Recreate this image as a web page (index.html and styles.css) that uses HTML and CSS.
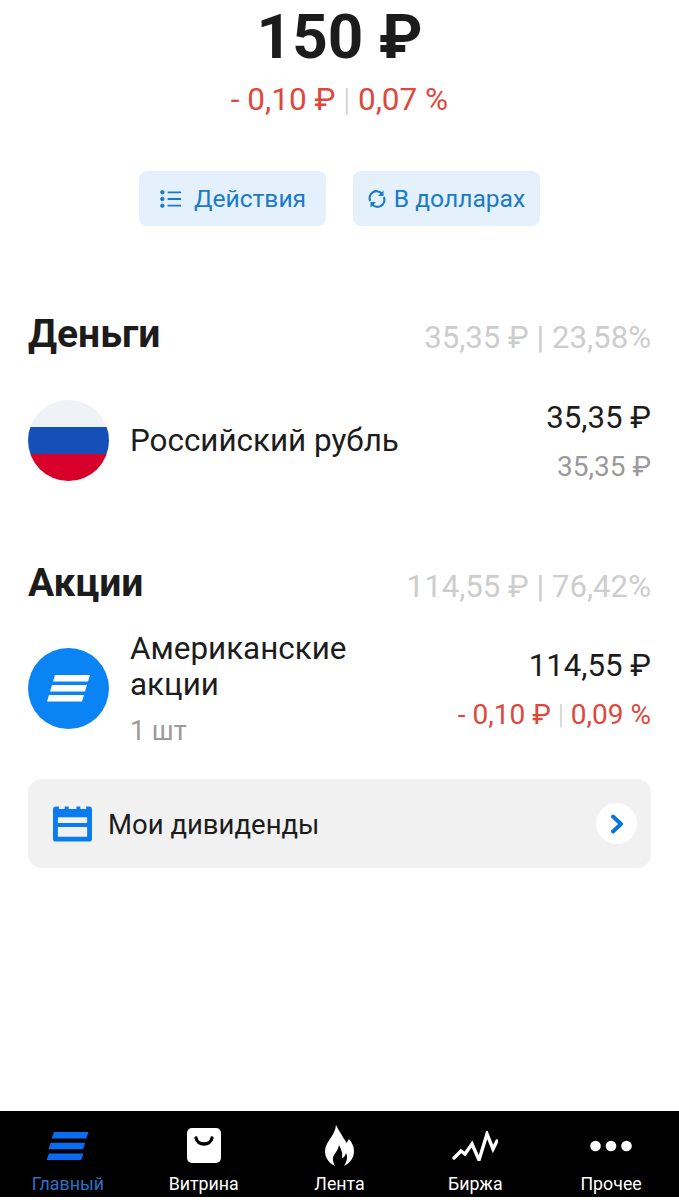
FILE: index.html
```html
<!DOCTYPE html>
<html lang="ru">
<head>
    <meta charset="UTF-8">
    <title>Портфель</title>
    <link rel="stylesheet" href="styles.css">
</head>
<body>

    <div class="screen">
        <!-- Total -->
        <div class="total">
            <div class="total-sum">150 ₽</div>
            <div class="total-change">- 0,10 ₽ <span class="sep">|</span> 0,07 %</div>
        </div>

        <!-- Buttons -->
        <div class="actions">
            <div class="action-btn action-list">
                <svg class="action-icon" width="23" height="24" viewBox="0 0 24 24">
                    <circle cx="3.5" cy="5" r="1.8"/><circle cx="3.5" cy="12" r="1.8"/><circle cx="3.5" cy="19" r="1.8"/>
                    <path d="M9 5h14M9 12h14M9 19h14" fill="none" stroke-width="1.9"/>
                </svg>
                <span>Действия</span>
            </div>
            <div class="action-btn action-currency">
                <svg class="action-icon" width="18" height="18" viewBox="0 0 18 18">
                    <path d="M2.2 11A7 7 0 0 1 13.5 3.2M15.8 7A7 7 0 0 1 4.5 14.8" fill="none" stroke-width="2.2"/>
                    <path class="fill" d="M15.5 0.5v5.5h-5.5zM2.5 17.500v-5.500h5.500z"/>
                </svg>
                <span>В долларах</span>
            </div>
        </div>

        <!-- Money -->
        <div class="section section-money">
            <div class="section-head">
                <h2>Деньги</h2>
                <div class="section-sum">35,35 ₽ | 23,58%</div>
            </div>
            <div class="row row-money">
                <svg class="round-icon" width="81" height="81" viewBox="0 0 81 81">
                    <clipPath id="flag"><circle cx="40.500" cy="40.500" r="40.500"/></clipPath>
                    <g clip-path="url(#flag)">
                        <rect width="81" height="27" fill="#eff3f7"/>
                        <rect y="27" width="81" height="27" fill="#1550b8"/>
                        <rect y="54" width="81" height="27" fill="#d6002b"/>
                    </g>
                </svg>
                <div class="row-name">Российский рубль</div>
                <div class="row-values">
                    <div class="row-value">35,35 ₽</div>
                    <div class="row-sub">35,35 ₽</div>
                </div>
            </div>
        </div>

        <!-- Stocks -->
        <div class="section section-stocks">
            <div class="section-head">
                <h2>Акции</h2>
                <div class="section-sum">114,55 ₽ | 76,42%</div>
            </div>
            <div class="row row-stocks">
                <svg class="round-icon" width="81" height="81" viewBox="0 0 81 81">
                    <circle cx="40.500" cy="40.500" r="40.500" fill="#0a84f5"/>
                    <path d="M27 27h35l-2 6.500H25zM24 37h35l-2 6.500H22zM21 47h35l-2 6.500H19z" fill="#fff"/>
                </svg>
                <div class="row-name-wrap">
                    <div class="row-name">Американские акции</div>
                    <div class="row-count">1 шт</div>
                </div>
                <div class="row-values">
                    <div class="row-value">114,55 ₽</div>
                    <div class="row-change">- 0,10 ₽ <span class="sep">|</span> 0,09 %</div>
                </div>
            </div>
        </div>

        <!-- Dividends -->
        <div class="dividends">
            <svg class="calendar" width="39" height="36" viewBox="0 0 40 36">
                <path d="M3 0h3v2.500h6V0h4v2.500h8V0h4v2.500h6V0h3a3 3 0 0 1 3 3v30a3 3 0 0 1-3 3H3a3 3 0 0 1-3-3V3a3 3 0 0 1 3-3zM5 11v6h30v-6zM5 21v10h30V21z" fill="#0a7cf0" fill-rule="evenodd"/>
            </svg>
            <div class="dividends-text">Мои дивиденды</div>
            <div class="dividends-arrow">
                <svg width="14" height="20" viewBox="0 0 14 20">
                    <path d="M3 2.500l8 7.500-8 7.500" fill="none" stroke="#0a74e0" stroke-width="4" stroke-linecap="round" stroke-linejoin="round"/>
                </svg>
            </div>
        </div>
    </div>

    <!-- Tab bar -->
    <div class="tabbar">
        <div class="tab tab-active">
            <div class="tab-icon">
                <svg width="46" height="28" viewBox="0 0 46 30">
                    <path d="M8 0h37l-2.500 7H5.500zM4.500 11.500h37l-2.500 7H2zM2.500 23h37L37 30H0z" fill="#0a6cf0"/>
                </svg>
            </div>
            <span>Главный</span>
        </div>
        <div class="tab">
            <div class="tab-icon">
                <svg width="34" height="35" viewBox="0 0 34 35">
                    <path d="M5 0h24a5 5 0 0 1 5 5v25a5 5 0 0 1-5 5H5a5 5 0 0 1-5-5V5a5 5 0 0 1 5-5z" fill="#fff"/>
                    <path d="M9 10c1.500 8 14.500 8 16 0" fill="none" stroke="#000" stroke-width="3.400" stroke-linecap="round"/>
                </svg>
            </div>
            <span>Витрина</span>
        </div>
        <div class="tab">
            <div class="tab-icon">
                <svg width="29" height="41" viewBox="0 0 29 41">
                    <path fill="#fff" d="M11 0C14 6 17 10 19 14C20 15 21 16 21 18C22 17 23 16 24 14C27 18 29 21 29 26C29 33 25 38 19 41C22 36 23 32 21 28C20 32 18 33 17 33C18 28 16 24 14 20C13 25 11 27 9 30C7 33 8 37 10 41C4 38 0 33 0 26C0 17 10 11 11 0Z"/>
                </svg>
            </div>
            <span>Лента</span>
        </div>
        <div class="tab">
            <div class="tab-icon">
                <svg width="46" height="30" viewBox="0 0 46 30">
                    <path d="M2 27L9 20L13 23L20 13L27 29L35 3L41 18L45 10" fill="none" stroke="#fff" stroke-width="3.400" stroke-linecap="round" stroke-linejoin="miter"/>
                </svg>
            </div>
            <span>Биржа</span>
        </div>
        <div class="tab">
            <div class="tab-icon">
                <svg width="42" height="12" viewBox="0 0 42 12">
                    <circle cx="5.500" cy="6" r="5.300" fill="#fff"/><circle cx="21" cy="6" r="5.300" fill="#fff"/><circle cx="36.500" cy="6" r="5.300" fill="#fff"/>
                </svg>
            </div>
            <span>Прочее</span>
        </div>
    </div>

</body>
</html>
```

FILE: styles.css
```css
/* General Styles */
body {
    font-family: 'Roboto', sans-serif;
    background-color: #ffffff;
    color: #1c1c1c;
    margin: 0;
    padding: 0;
}

.screen {
    height: 1111px;
    padding: 0 28px;
    box-sizing: border-box;
    overflow: hidden;
}

/* Total */
.total {
    text-align: center;
}

.total-sum {
    font-size: 62px;
    line-height: 66px;
    margin-top: 4px;
    font-weight: 700;
}

.total-change {
    font-size: 31.500px;
    line-height: 36px;
    margin-top: 12px;
    color: #e0473c;
}

.sep {
    color: #cfcfcf;
    font-weight: 300;
}

/* Buttons */
.actions {
    display: flex;
    justify-content: center;
    gap: 27px;
    margin-top: 53px;
}

.action-btn {
    display: flex;
    align-items: center;
    justify-content: center;
    height: 55px;
    width: 187px;
    background-color: #e4f1fd;
    border-radius: 8px;
    font-size: 24.600px;
    color: #1a7ac8;
}

.action-list {
    gap: 12px;
}

.action-currency {
    gap: 8px;
}

.action-icon {
    fill: #1a7ac8;
    stroke: #1a7ac8;
}

.action-icon .fill {
    stroke: none;
}

/* Sections */
.section-money {
    margin-top: 83px;
}

.section-stocks {
    margin-top: 75px;
}

.section-head {
    display: flex;
    justify-content: space-between;
    align-items: flex-start;
    height: 50px;
}

h2 {
    font-size: 39px;
    line-height: 50px;
    font-weight: 700;
    margin: 0;
}

.section-sum {
    font-size: 31.200px;
    line-height: 36px;
    margin-top: 11px;
    color: #cdcdcd;
}

.row {
    display: flex;
    align-items: center;
}

.row-money {
    margin-top: 39px;
}

.row-stocks {
    margin-top: 21px;
}

.round-icon {
    flex: none;
    margin-right: 21px;
}

.row-name {
    font-size: 31.400px;
    line-height: 36px;
    flex: 1;
}

.row-name-wrap {
    flex: 1;
    max-width: 260px;
    padding-top: 2px;
}

.row-count {
    font-size: 27px;
    line-height: 32px;
    margin-top: 12px;
    color: #9a9a9a;
}

.row-values {
    margin-left: auto;
    padding-top: 2px;
    text-align: right;
}

.row-value {
    font-size: 31.200px;
    line-height: 36px;
}

.row-sub {
    font-size: 28px;
    line-height: 32px;
    margin-top: 15px;
    color: #9a9a9a;
}

.row-change {
    font-size: 28px;
    line-height: 32px;
    margin-top: 15px;
    color: #e0473c;
}

/* Dividends */
.dividends {
    display: flex;
    align-items: center;
    height: 89px;
    margin-top: 32px;
    padding: 0 14px 0 25px;
    background-color: #f1f1f1;
    border-radius: 14px;
}

.calendar {
    margin-right: 16px;
}

.dividends-text {
    font-size: 27.500px;
    padding-top: 2px;
    flex: 1;
}

.dividends-arrow {
    display: flex;
    align-items: center;
    justify-content: center;
    width: 41px;
    height: 41px;
    border-radius: 50%;
    background-color: #ffffff;
}

/* Tab bar */
.tabbar {
    display: flex;
    height: 86px;
    background-color: #000000;
}

.tab {
    flex: 1;
    display: flex;
    flex-direction: column;
    align-items: center;
    padding-top: 7px;
    font-size: 17.800px;
    line-height: 22px;
    color: #ffffff;
}

.tab-active {
    color: #2f6fc4;
}

.tab-icon {
    height: 55px;
    display: flex;
    align-items: center;
    justify-content: center;
}
```
